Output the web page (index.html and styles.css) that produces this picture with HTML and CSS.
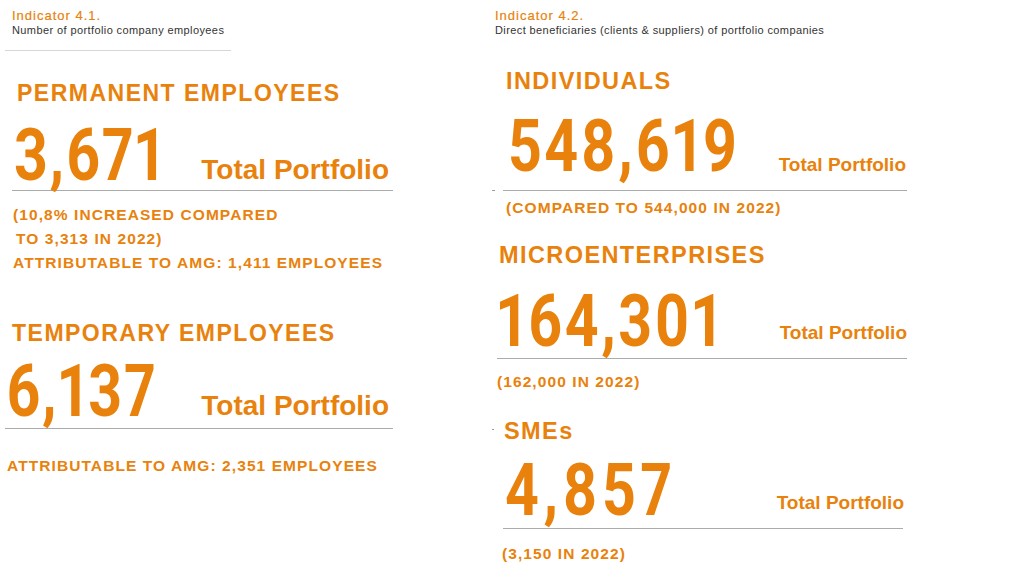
FILE: index.html
```html
<!DOCTYPE html>
<html lang="en">
<head>
<meta charset="utf-8">
<title>Indicators 4.1 and 4.2</title>
<link rel="stylesheet" href="styles.css">
</head>
<body>
<main class="page">
  <section class="col col-left">
    <header class="ind">
      <div class="ind-title">Indicator 4.1.</div>
      <div class="ind-sub">Number of portfolio company employees</div>
    </header>
    <div class="ind-rule"></div>

    <h2 class="cat cat-perm">PERMANENT EMPLOYEES</h2>
    <div class="stat stat-perm">
      <span class="num num-l">3,671</span>
      <span class="tp tp-lg">Total Portfolio</span>
    </div>
    <div class="note note-perm">
      <p>(10,8% INCREASED COMPARED</p>
      <p class="indent">TO 3,313 IN 2022)</p>
      <p>ATTRIBUTABLE TO AMG: 1,411 EMPLOYEES</p>
    </div>

    <h2 class="cat cat-temp">TEMPORARY EMPLOYEES</h2>
    <div class="stat stat-temp">
      <span class="num num-l">6,137</span>
      <span class="tp tp-lg">Total Portfolio</span>
    </div>
    <div class="note note-temp">
      <p>ATTRIBUTABLE TO AMG: 2,351 EMPLOYEES</p>
    </div>
  </section>

  <section class="col col-right">
    <header class="ind">
      <div class="ind-title">Indicator 4.2.</div>
      <div class="ind-sub">Direct beneficiaries (clients &amp; suppliers) of portfolio companies</div>
    </header>

    <h2 class="cat cat-r cat-ind">INDIVIDUALS</h2>
    <div class="stat stat-ind">
      <span class="num num-r">548,619</span>
      <span class="tp tp-sm">Total Portfolio</span>
    </div>
    <div class="note note-ind">
      <p>(COMPARED TO 544,000 IN 2022)</p>
    </div>

    <h2 class="cat cat-r cat-micro">MICROENTERPRISES</h2>
    <div class="stat stat-micro">
      <span class="num num-r">164,301</span>
      <span class="tp tp-sm tp-micro">Total Portfolio</span>
    </div>
    <div class="note note-micro">
      <p>(162,000 IN 2022)</p>
    </div>

    <h2 class="cat cat-r cat-sme">SMEs</h2>
    <div class="stat stat-sme">
      <span class="num num-r num-wide">4,857</span>
      <span class="tp tp-sm tp-sme">Total Portfolio</span>
    </div>
    <div class="note note-sme">
      <p>(3,150 IN 2022)</p>
    </div>
  </section>
</main>
</body>
</html>
```

FILE: styles.css
```css
* {
  box-sizing: border-box;
  margin: 0;
  padding: 0;
}

html,
body {
  width: 1024px;
  height: 584px;
  overflow: hidden;
  background: #ffffff;
}

body {
  font-family: "Liberation Sans", Arial, sans-serif;
  color: #e8820c;
}

.page {
  display: grid;
  grid-template-columns: 480px 544px;
  height: 584px;
}

.col {
  display: flex;
  flex-direction: column;
  align-items: flex-start;
  padding-top: 8px;
}

/* indicator header */
.ind-title {
  font-size: 13px;
  line-height: 16px;
  letter-spacing: 1px;
  color: #e8820c;
  -webkit-text-stroke: 0.2px #e8820c;
}

.ind-sub {
  font-size: 11px;
  line-height: 13px;
  letter-spacing: 0.4px;
  color: #333333;
}

.col-left .ind {
  margin-left: 12px;
}

.col-right .ind {
  margin-left: 15px;
}

.ind-rule {
  margin: 13px 0 0 5px;
  width: 226px;
  height: 1px;
  background: #d6d6d6;
}

/* category headings */
.cat {
  font-weight: 700;
  font-size: 23px;
  line-height: 26px;
  letter-spacing: 0.065em;
  white-space: nowrap;
}

.cat-r {
  font-size: 23.5px;
  letter-spacing: 0.06em;
}

.cat-perm { margin: 29px 0 0 17px; }
.cat-temp { margin: 45px 0 0 12px; }
.cat-ind { margin: 31px 0 0 26px; }
.cat-micro { margin: 22px 0 0 19px; }
.cat-sme {
  margin: 24px 0 0 24px;
  position: relative;
}

.cat-sme::before {
  content: "";
  position: absolute;
  left: -12px;
  top: 11px;
  width: 2px;
  height: 1px;
  background: #9a9a9a;
}

/* big number rows */
.stat {
  display: flex;
  justify-content: space-between;
  align-items: flex-end;
  border-bottom: 1px solid #ababab;
}

.num {
  display: inline-block;
  flex: 0 1 auto;
  min-width: 0;
  font-family: Roboto, "DejaVu Sans", sans-serif;
  font-weight: 700;
  font-size: 73px;
  line-height: 60px;
  font-variant-numeric: proportional-nums;
  transform: scaleX(0.81);
  transform-origin: 0 100%;
  white-space: nowrap;
}

.num-l { letter-spacing: 2px; }
.num-r { letter-spacing: 3px; }
.num-r.num-wide { letter-spacing: 5.5px; }

.tp {
  flex: 0 0 auto;
  font-weight: 700;
  white-space: nowrap;
}

.tp-lg {
  font-size: 28px;
  line-height: 30px;
}

.tp-sm {
  font-size: 19px;
  line-height: 22px;
}

.tp-micro { margin-bottom: 7px; }
.tp-sme { margin-bottom: 6px; margin-right: -1px; }

.stat-perm {
  margin: 19px 0 0 12px;
  width: 381px;
  padding: 0 4px 5px 2px;
}

.stat-temp {
  margin: 15px 0 0 5px;
  width: 388px;
  padding: 0 4px 7px 1px;
}

.stat-ind {
  position: relative;
  margin: 22px 0 0 23px;
  width: 404px;
  padding: 0 1px 14px 5px;
}

.stat-ind::before {
  content: "";
  position: absolute;
  left: -11px;
  bottom: -1px;
  width: 3px;
  height: 1px;
  background: #9a9a9a;
}

.stat-micro {
  margin: 23px 0 0 17px;
  width: 410px;
  padding: 0 0 7px 0;
}

.stat-sme {
  margin: 16px 0 0 23px;
  width: 400px;
  padding: 0 0 8px 2px;
}

/* notes under the rules */
.note p {
  font-weight: 700;
  font-size: 15.5px;
  line-height: 24px;
  letter-spacing: 0.07em;
  white-space: nowrap;
}

.note .indent {
  padding-left: 3px;
}

.note-perm { margin: 12px 0 0 13px; }
.note-temp { margin: 25px 0 0 7px; }
.note-ind { margin: 5px 0 0 26px; }
.note-micro { margin: 11px 0 0 17px; }
.note-sme { margin: 13px 0 0 22px; }
```
